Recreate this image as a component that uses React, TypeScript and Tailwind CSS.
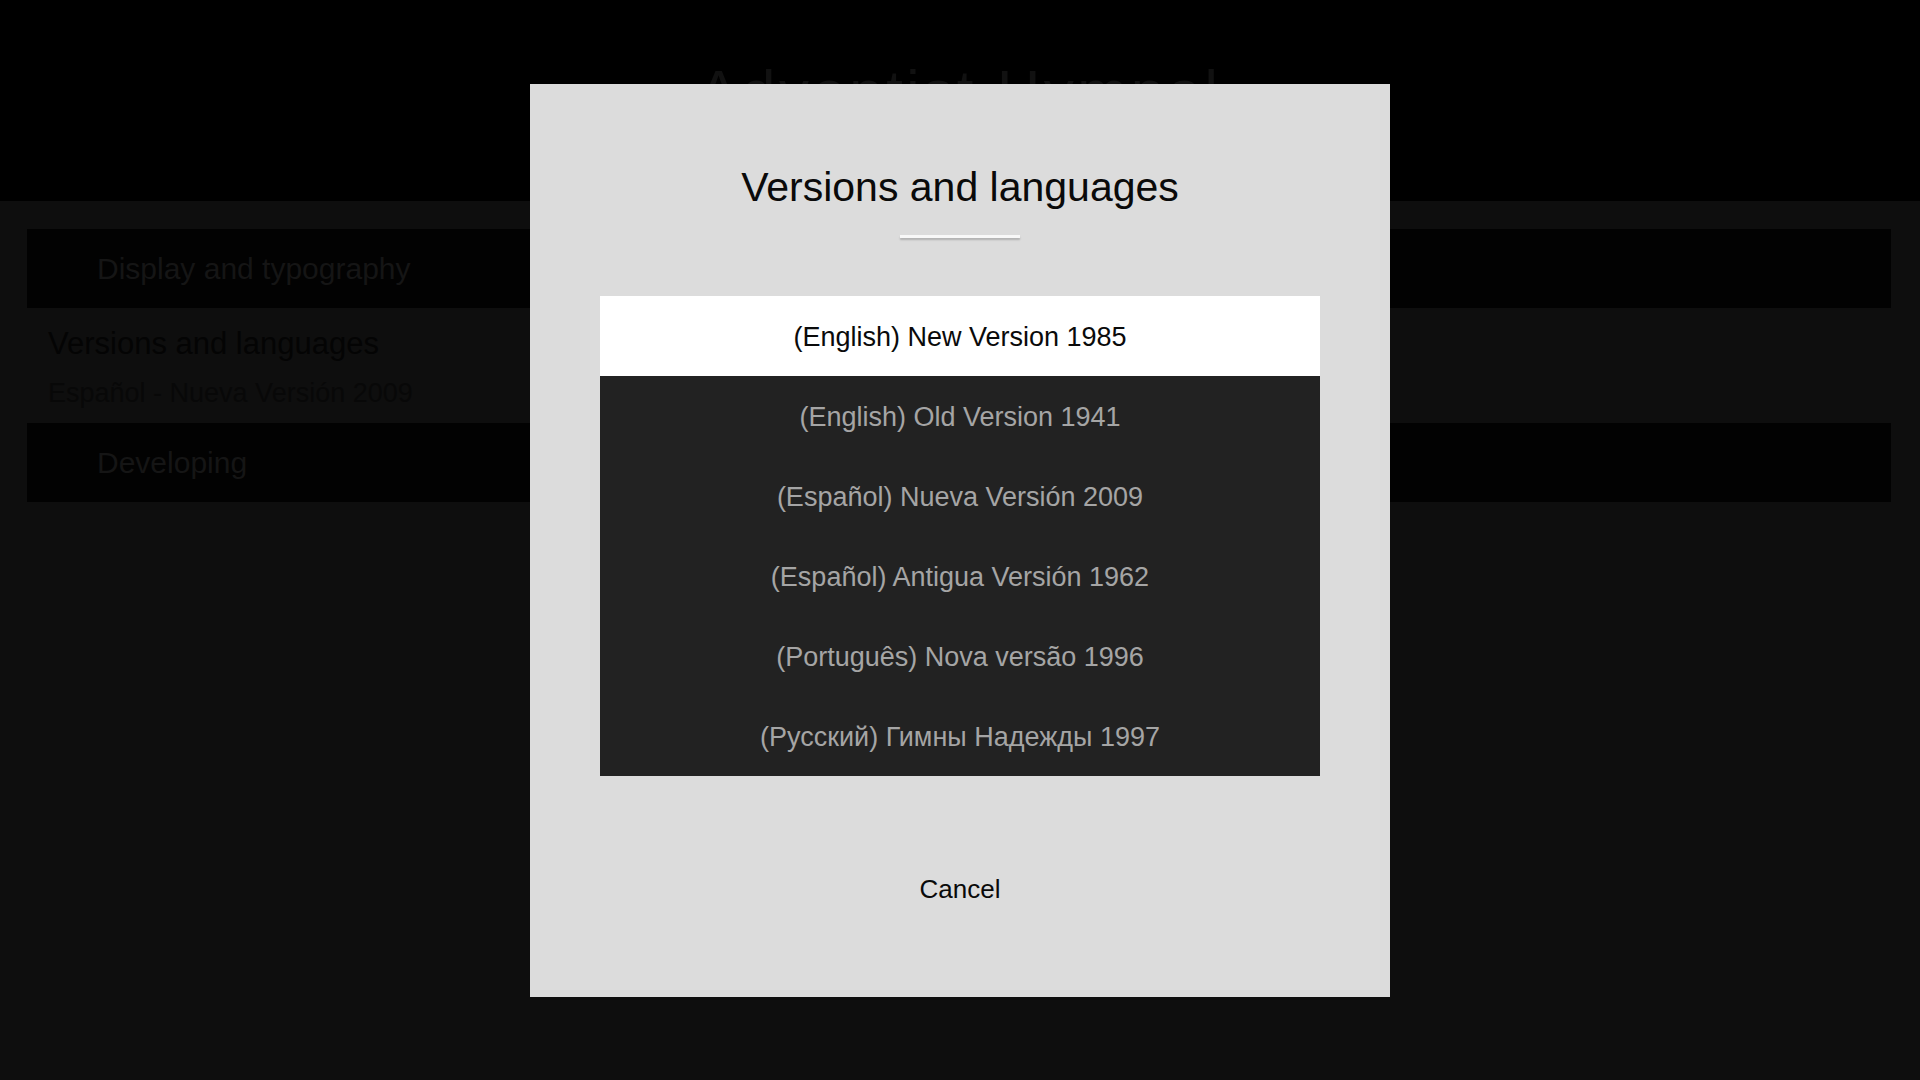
import React from 'react'

const VERSIONS = [
  '(English) New Version 1985',
  '(English) Old Version 1941',
  '(Español) Nueva Versión 2009',
  '(Español) Antigua Versión 1962',
  '(Português) Nova versão 1996',
  '(Русский) Гимны Надежды 1997',
]

const font = "font-['Liberation_Sans',Arial,sans-serif]"

const App = () => {
  return (
    <div className={`relative h-[1080px] w-[1920px] overflow-hidden bg-[#0e0e0e] ${font}`}>
      <header className="h-[201px] bg-black pt-[62px] text-center">
        <h1 className="text-[60px] leading-none tracking-[3.5px] text-[#111111]">Adventist Hymnal</h1>
      </header>

      <ul className="flex flex-col pl-[27px] pr-[29px] pt-[28px]">
        <li className="flex h-[79px] items-center bg-[#020202] pl-[70px] text-[30px] leading-none text-[#151515]">
          Display and typography
        </li>
        <li className="flex h-[115px] flex-col pl-[21px] pt-[20px]">
          <span className="text-[31px] leading-none text-[#040404]">Versions and languages</span>
          <span className="mt-[21px] text-[27px] leading-none text-[#080808]">Español - Nueva Versión 2009</span>
        </li>
        <li className="flex h-[79px] items-center bg-[#020202] pl-[70px] text-[30px] leading-none text-[#151515]">
          Developing
        </li>
      </ul>

      <div className="absolute inset-0 flex items-center justify-center">
        <div className="flex h-[913px] w-[860px] flex-col items-center bg-[#dcdcdc] pt-[83px]">
          <h2 className="text-[41px] leading-none text-[#0a0a0a]">Versions and languages</h2>
          <div className="mt-[27px] h-[3px] w-[120px] bg-[#f8f8f8] shadow-[0_2px_2px_rgba(0,0,0,0.2)]" />
          <ul className="mt-[58px] w-[720px] bg-[#222222]">
            {VERSIONS.map((v, i) => (
              <li
                key={v}
                className={
                  i === 0
                    ? 'flex h-[80px] items-center justify-center bg-white pt-[4px] text-[27px] leading-none text-[#0a0a0a]'
                    : 'flex h-[80px] items-center justify-center pt-[4px] text-[27px] leading-none text-[#a5a5a5]'
                }
              >
                {v}
              </li>
            ))}
          </ul>
          <button className="mt-[100px] text-[26px] leading-none text-[#0a0a0a]">Cancel</button>
        </div>
      </div>
    </div>
  )
}

export default App
